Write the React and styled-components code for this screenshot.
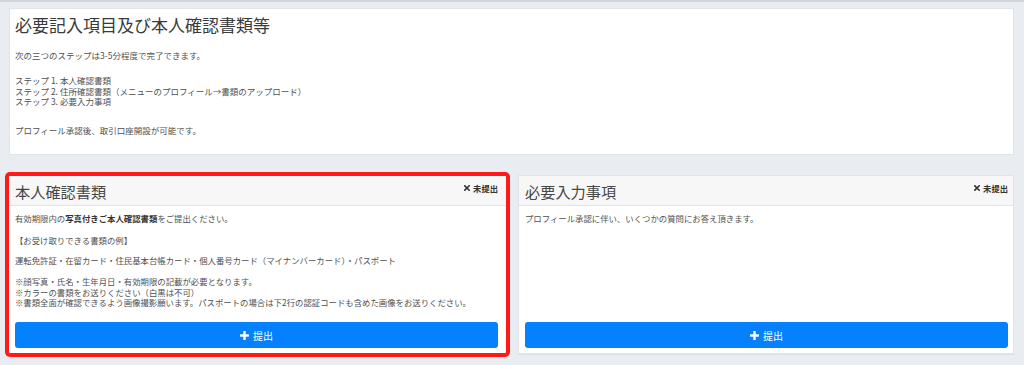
import React from "react";
import styled, { createGlobalStyle } from "styled-components";

const Global = createGlobalStyle`
  html, body { margin: 0; padding: 0; }
  body {
    background: #e9ecf0;
    font-family: "Noto Sans CJK JP", "Noto Sans", sans-serif;
    color: #444;
  }
`;

const Page = styled.div`
  border-top: 2px solid #d2d6db;
  padding: 6px 10px 0 8px;
  width: 1024px;
  height: 363px;
  box-sizing: border-box;
`;

const Intro = styled.section`
  margin-left: 1px;
  background: #fff;
  border: 1px solid #e0e3e7;
  padding: 6px 6px 19px 5px;
  height: 147px;
  box-sizing: border-box;
`;

const PageTitle = styled.h1`
  margin: 0;
  font-size: 17px;
  line-height: 20px;
  font-weight: 400;
  color: #3a3a3a;
`;

const Para = styled.p`
  margin: ${(p) => p.$top || 0}px 0 0 0;
  font-size: ${(p) => p.$size || 8.4}px;
  line-height: 10.5px;
  color: #505050;
  b { color: #333; font-weight: 700; }
`;

const Cards = styled.div`
  display: grid;
  grid-template-columns: 499px 496px;
  column-gap: 11px;
  margin-top: 20px;
  align-items: start;
`;

const Card = styled.div`
  background: #fff;
  border: 1px solid ${(p) => (p.$highlight ? "#ff1a1a" : "#e0e3e7")};
  box-sizing: border-box;
  display: flex;
  flex-direction: column;
  height: 179px;
  overflow: hidden;
  border-radius: ${(p) => (p.$highlight ? "2px" : "0")};
  box-shadow: ${(p) => (p.$highlight ? "0 0 0 3px #ff1a1a" : "0 1px 1px rgba(0,0,0,0.04)")};
`;

const CardHeader = styled.div`
  display: flex;
  align-items: center;
  justify-content: space-between;
  height: 30px;
  flex: none;
  box-sizing: border-box;
  background: #f7f7f7;
  border-bottom: 1px solid #e3e3e3;
  padding: 0 ${(p) => p.$right}px 0 6px;
`;

const CardTitle = styled.h2`
  margin: 0;
  font-size: 15.2px;
  font-weight: 400;
  color: #474747;
  line-height: 20px;
`;

const Status = styled.span`
  display: flex;
  align-items: center;
  gap: 3px;
  font-size: 8.3px;
  font-weight: 700;
  color: #333;
  margin-top: -5px;
`;

const CardBody = styled.div`
  flex: 1;
  min-height: 0;
  display: flex;
  flex-direction: column;
  padding: 7px ${(p) => p.$right}px 5px 6px;
`;

const SubmitButton = styled.button`
  margin-top: auto;
  flex: none;
  height: 26px;
  width: 100%;
  border: none;
  border-radius: 3px;
  background: #0581fd;
  color: #fff;
  font-family: inherit;
  font-size: 10px;
  display: flex;
  align-items: center;
  justify-content: center;
  gap: 4px;
  cursor: pointer;
`;

const XIcon = () => (
  <svg width="6" height="6" viewBox="0 0 6 6">
    <path d="M0.8 0.8 L5.2 5.2 M5.2 0.8 L0.8 5.2" stroke="#333" strokeWidth="1.6" strokeLinecap="square" />
  </svg>
);

const PlusIcon = () => (
  <svg width="9" height="9" viewBox="0 0 9 9">
    <rect x="3.3" y="0" width="2.4" height="9" fill="#fff" />
    <rect x="0" y="3.3" width="9" height="2.4" fill="#fff" />
  </svg>
);

const DocCard = ({ title, highlight, right, children }) => (
  <Card $highlight={highlight}>
    <CardHeader $right={right}>
      <CardTitle>{title}</CardTitle>
      <Status>
        <XIcon />
        未提出
      </Status>
    </CardHeader>
    <CardBody $right={right}>
      {children}
      <SubmitButton>
        <PlusIcon />
        提出
      </SubmitButton>
    </CardBody>
  </Card>
);

export default function App() {
  return (
    <>
      <Global />
      <Page>
        <Intro>
          <PageTitle>必要記入項目及び本人確認書類等</PageTitle>
          <Para $top={15} $size={8.5}>次の三つのステップは3-5分程度で完了できます。</Para>
          <Para $top={14.5} $size={8.5}>
            ステップ 1. 本人確認書類
            <br />
            ステップ 2. 住所確認書類（メニューのプロフィール→書類のアップロード）
            <br />
            ステップ 3. 必要入力事項
          </Para>
          <Para $top={18.5} $size={8.5}>プロフィール承認後、取引口座開設が可能です。</Para>
        </Intro>
        <Cards>
          <DocCard title="本人確認書類" highlight right={8}>
            <Para>
              有効期限内の<b>写真付きご本人確認書類</b>をご提出ください。
            </Para>
            <Para $top={11}>【お受け取りできる書類の例】</Para>
            <Para $top={10}>
              運転免許証・在留カード・住民基本台帳カード・個人番号カード（マイナンバーカード）・パスポート
            </Para>
            <Para $top={10.5}>
              ※顔写真・氏名・生年月日・有効期限の記載が必要となります。
              <br />
              ※カラーの書類をお送りください（白黒は不可）
              <br />
              ※書類全面が確認できるよう画像撮影願います。パスポートの場合は下2行の認証コードも含めた画像をお送りください。
            </Para>
          </DocCard>
          <DocCard title="必要入力事項" right={5}>
            <Para>プロフィール承認に伴い、いくつかの質問にお答え頂きます。</Para>
          </DocCard>
        </Cards>
      </Page>
    </>
  );
}
